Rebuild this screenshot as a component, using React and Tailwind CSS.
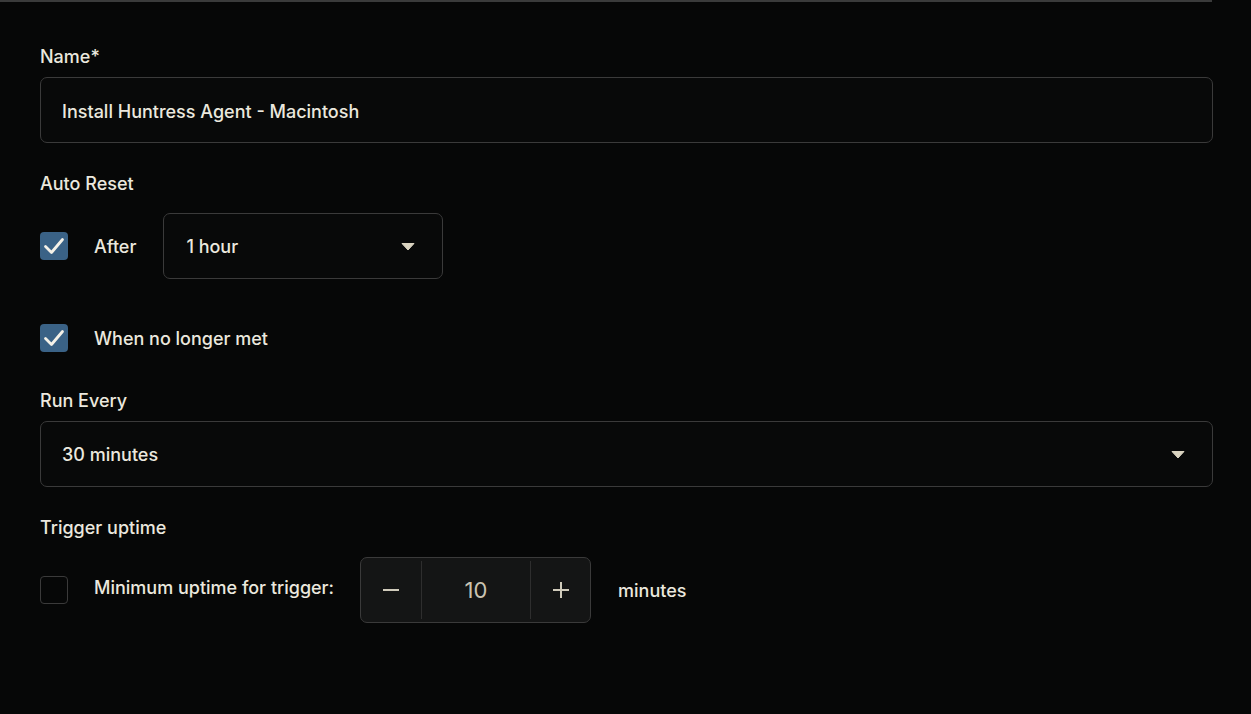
import React from "react";

const Check = () => (
  <svg width="24" height="24" viewBox="0 0 24 24" fill="none">
    <path d="M3.5 12.5l6 6L20.5 5.5" stroke="#f4f1e8" strokeWidth="2.8" strokeLinecap="round" strokeLinejoin="round" />
  </svg>
);

const Caret = () => (
  <svg width="14" height="9" viewBox="0 0 14 9">
    <path d="M1 1.5h12L7 8z" fill="#d9d3c0" stroke="#d9d3c0" strokeWidth="1" strokeLinejoin="round" />
  </svg>
);

function Checkbox({ checked }) {
  return checked ? (
    <div className="w-[28px] h-[28px] rounded-[4px] bg-[#3a6286] flex items-center justify-center shrink-0">
      <Check />
    </div>
  ) : (
    <div className="w-[28px] h-[28px] rounded-[4px] border border-[#3a3a3a] shrink-0" />
  );
}

export default function App() {
  return (
    <div
      className="w-[1251px] h-[714px] bg-[#060707] text-[#ebe8de] overflow-hidden"
      style={{ fontFamily: "Inter, 'Noto Sans', sans-serif" }}
    >
      <div className="w-[1212px] h-[2px] bg-[#3a3b3b]" />
      <div className="pl-[40px] w-[1213px] text-[18px] font-medium">
        <div className="pt-[43px] leading-[24px]">Name*</div>
        <div className="mt-[8px] h-[66px] border border-[#3a3a3a] rounded-[7px] bg-[#080909] flex items-center px-[21px] pt-[2px]">
          Install Huntress Agent - Macintosh
        </div>

        <div className="mt-[29px] leading-[24px]">Auto Reset</div>
        <div className="mt-[17px] flex items-center h-[66px]">
          <Checkbox checked />
          <span className="ml-[26px]">After</span>
          <div className="ml-[27px] w-[280px] h-[66px] border border-[#3a3a3a] rounded-[7px] bg-[#080909] flex items-center justify-between pl-[22px] pr-[27px]">
            <span>1 hour</span>
            <Caret />
          </div>
        </div>

        <div className="mt-[39px] flex items-center h-[40px]">
          <Checkbox checked />
          <span className="ml-[26px]">When no longer met</span>
        </div>

        <div className="mt-[31px] leading-[24px]">Run Every</div>
        <div className="mt-[8px] h-[66px] border border-[#3a3a3a] rounded-[7px] bg-[#080909] flex items-center justify-between pl-[21px] pr-[27px]">
          <span>30 minutes</span>
          <Caret />
        </div>

        <div className="mt-[29px] leading-[24px]">Trigger uptime</div>
        <div className="mt-[17px] flex items-center h-[66px]">
          <Checkbox />
          <span className="ml-[26px] -mt-[6px]">Minimum uptime for trigger:</span>
          <div className="ml-[26px] w-[231px] h-[66px] border border-[#3a3a3a] rounded-[7px] bg-[#141515] flex items-stretch">
            <div className="w-[60px] flex items-center justify-center">
              <svg width="20" height="20" viewBox="0 0 20 20"><path d="M2 10h16" stroke="#d0cbbb" strokeWidth="2" /></svg>
            </div>
            <div className="w-[1px] bg-[#2e2e2e] my-[3px]" />
            <div className="flex-1 flex items-center justify-center text-[22px] font-normal text-[#c9c3b2]">10</div>
            <div className="w-[1px] bg-[#2e2e2e] my-[3px]" />
            <div className="w-[59px] flex items-center justify-center">
              <svg width="20" height="20" viewBox="0 0 20 20"><path d="M2 10h16M10 2v16" stroke="#d0cbbb" strokeWidth="2" /></svg>
            </div>
          </div>
          <span className="ml-[27px]">minutes</span>
        </div>
      </div>
    </div>
  );
}
